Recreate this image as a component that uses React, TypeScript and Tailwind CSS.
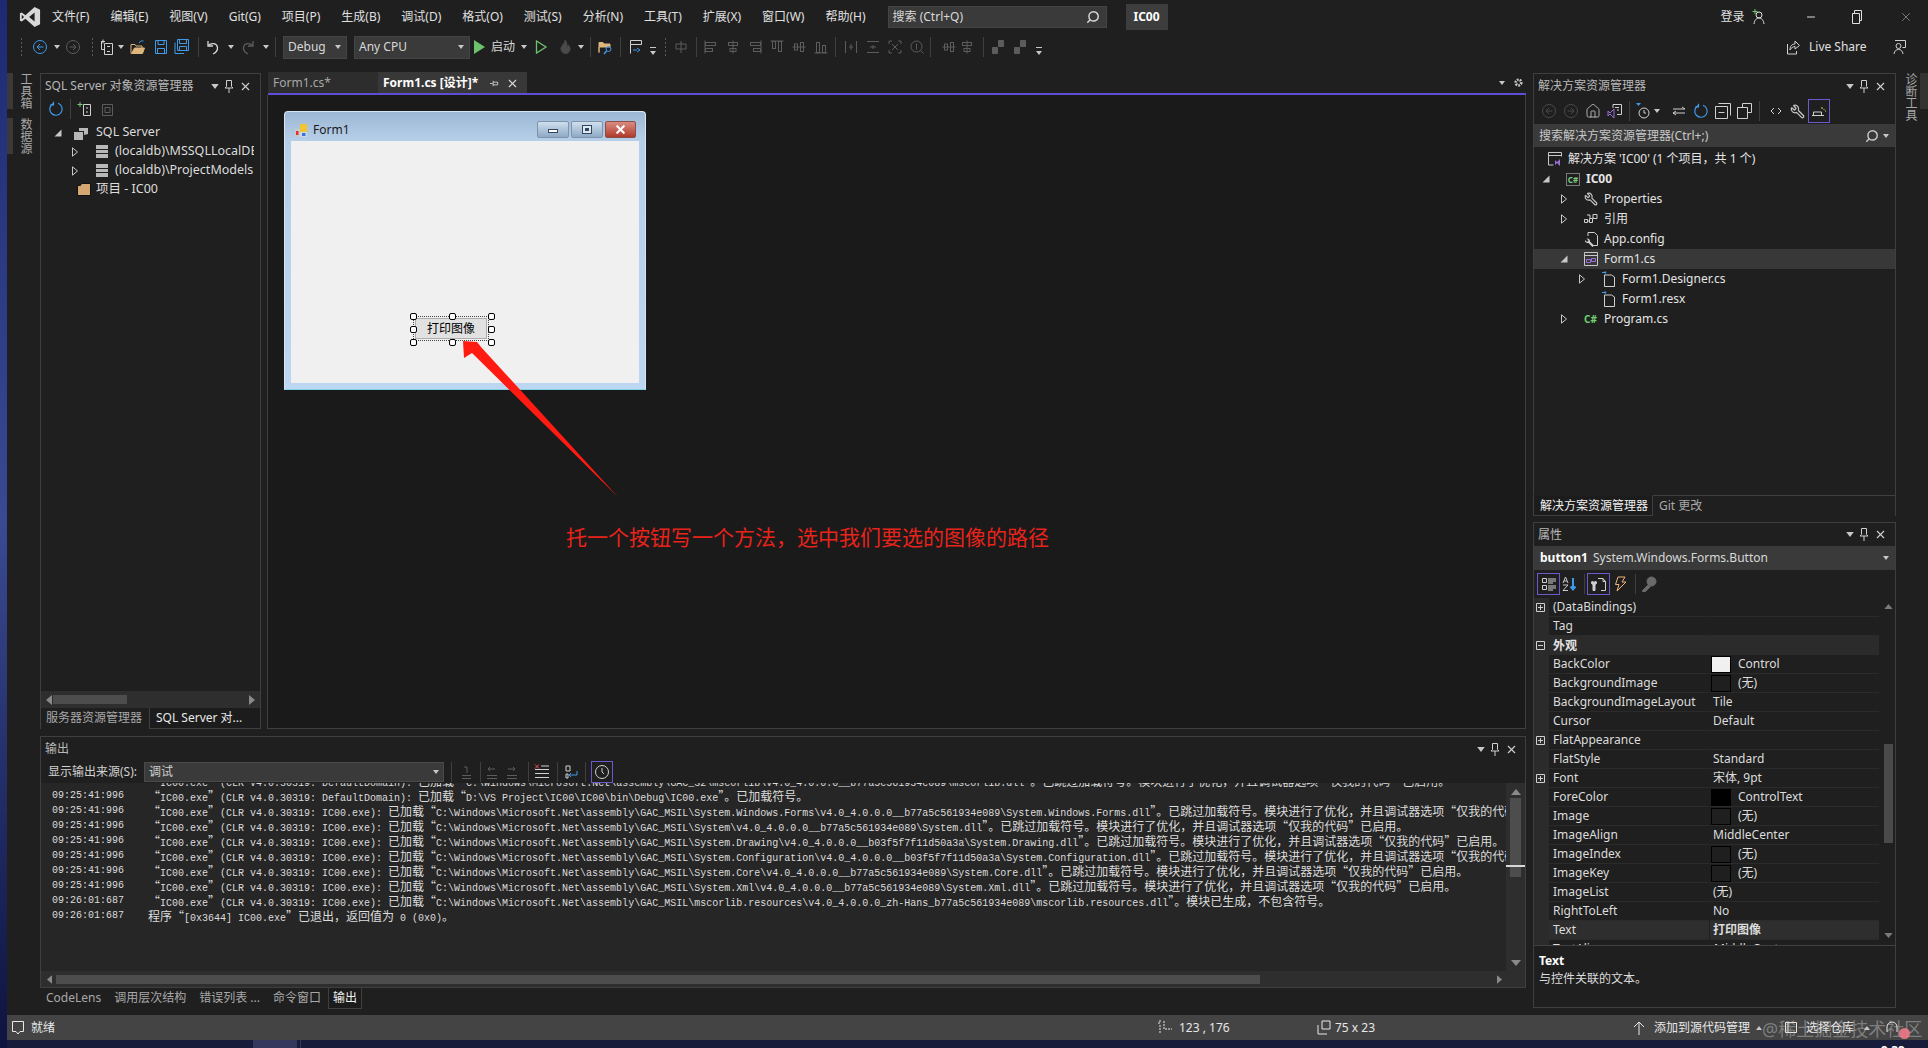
import type { ReactNode } from "react";
import { Home, Minus, Search, Wrench, X } from "lucide-react";

const Svg = ({ className = "", children }: { className?: string; children: ReactNode }) => (
  <svg viewBox="0 0 16 16" fill="none" stroke="currentColor" strokeWidth="1" className={`w-[16px] h-[16px] shrink-0 ${className}`}>
    {children}
  </svg>
);

const Dd = ({ className = "" }: { className?: string }) => (
  <svg viewBox="0 0 6 4" className={`w-[6px] h-[4px] shrink-0 text-[#c8c8c8] ${className}`}>
    <path d="M0 0h6L3 4z" fill="currentColor" />
  </svg>
);

const Sep = ({ className = "" }: { className?: string }) => <div className={`w-px h-[20px] bg-[#3f3f3f] shrink-0 ${className}`} />;

const Grip = ({ className = "" }: { className?: string }) => (
  <div className={`w-[3px] h-[20px] shrink-0 bg-[radial-gradient(#5a5a5a_0.8px,transparent_0.9px)] bg-[length:3px_4px] ${className}`} />
);

const Overflow = ({ className = "" }: { className?: string }) => (
  <svg viewBox="0 0 6 8" className={`w-[6px] h-[8px] mt-[8px] shrink-0 text-[#c8c8c8] ${className}`}>
    <path d="M0 0h6v1H0zM0 4h6L3 8z" fill="currentColor" />
  </svg>
);

const Refresh = ({ className = "" }: { className?: string }) => (
  <Svg className={`text-[#3f9ae8] ${className}`}>
    <path d="M5 2.600A6.200 6.200 0 1 0 10 2.200" strokeWidth="1.200" />
    <path d="M5.500 .8v3h-3" strokeWidth="1.200" />
  </Svg>
);

const AlignIcon = ({ v = 0, className = "" }: { v?: number; className?: string }) => (
  <Svg className={`text-[#5c5c5c] ${className}`}>
    {v % 2 === 0 ? (
      <>
        <path d="M2 1.500v13" />
        <rect x="2.500" y="3.500" width="10" height="3" />
        <rect x="2.500" y="9.500" width="7" height="3" />
      </>
    ) : (
      <>
        <path d="M8 1.500v13" />
        <rect x="3.500" y="3.500" width="9" height="3" />
        <rect x="5" y="9.500" width="6" height="3" />
      </>
    )}
  </Svg>
);

const DistIcon = ({ className = "" }: { className?: string }) => (
  <Svg className={`text-[#5c5c5c] ${className}`}>
    <path d="M2.500 2v12M13.500 2v12M6 8h4M8 5v6" />
  </Svg>
);

const Caret = ({ open = false }: { open?: boolean }) => (
  <svg viewBox="0 0 8 10" className="w-[8px] h-[10px] text-[#c8c8c8]">
    {open ? <path d="M7.500 1.500v7h-7z" fill="currentColor" /> : <path d="M1.500 .8 6.500 5l-5 4.200z" fill="none" stroke="currentColor" />}
  </svg>
);

const PanelControls = ({ className = "" }: { className?: string }) => (
  <div className={`flex items-center text-[#d0d0d0] ${className}`}>
    <Dd className="w-[8px] h-[5px]" />
    <svg viewBox="0 0 10 13" className="w-[10px] h-[13px] ml-[5px]">
      <path d="M2.500 .5h5v6l1.500 1.500H1L2.500 6.500zM5 8v5" fill="none" stroke="currentColor" />
    </svg>
    <X className="w-[13px] h-[13px] ml-[5px]" strokeWidth={2} />
  </div>
);

const Vertical = ({ children, className = "" }: { children: ReactNode; className?: string }) => (
  <div className={`[writing-mode:vertical-rl] whitespace-nowrap text-[12px] leading-[14px] text-[#a8a8a8] ${className}`}>{children}</div>
);

const menus = ["文件(F)", "编辑(E)", "视图(V)", "Git(G)", "项目(P)", "生成(B)", "调试(D)", "格式(O)", "测试(S)", "分析(N)", "工具(T)", "扩展(X)", "窗口(W)", "帮助(H)"];

const TitleBar = () => (
  <div className="h-[32px] pt-[1px] flex items-center shrink-0 text-[#e0e0e0] text-[12px]">
    <svg viewBox="0 0 24 24" className="w-[22px] h-[22px] ml-[12px] text-[#d8d8d8]">
      <path fillRule="evenodd" fill="currentColor" d="M17 1l6 3v16l-6 3-10-9-4 3-2-1V8l2-1 4 3zM17 7l-6 5 6 5zM3 9.500v5L5.500 12z" />
    </svg>
    <div className="flex gap-[21px] ml-[11px] whitespace-nowrap">
      {menus.map((m) => (
        <span key={m}>{m}</span>
      ))}
    </div>
    <div className="ml-[22px] w-[219px] h-[22px] bg-[#3a3a3a] border border-[#444] flex items-center justify-between px-[4px] text-[#d8d8d8]">
      <span>搜索 (Ctrl+Q)</span>
      <Search className="w-[14px] h-[14px] -scale-x-100 mr-[2px]" strokeWidth={2.500} />
    </div>
    <div className="ml-[19px] w-[42px] h-[26px] bg-[#3d3d3d] flex items-center justify-center font-bold text-white">IC00</div>
    <span className="ml-[553px]">登录</span>
    <svg viewBox="0 0 14 16" className="w-[14px] h-[16px] ml-[7px]">
      <circle cx="7" cy="6" r="3" fill="none" stroke="currentColor" />
      <path d="M2 15c.5-4 2.500-6 5-6s4.500 2 5 6" fill="none" stroke="currentColor" />
      <path d="M3 0v5M.5 2.500h5" stroke="#6fcf6f" />
    </svg>
    <Minus className="w-[12px] h-[12px] ml-[39px]" />
    <svg viewBox="0 0 12 14" className="w-[12px] h-[14px] ml-[34px]">
      <path d="M1.500 3.500h7v10h-7zM3.500 3.500v-3h7v10h-2" fill="none" stroke="currentColor" />
    </svg>
    <X className="w-[14px] h-[14px] ml-[36px] text-[#b8b8b8]" strokeWidth={1} />
  </div>
);

const ToolBar = () => (
  <div className="h-[32px] pb-[2px] flex items-center shrink-0 text-[12px] text-[#d8d8d8]">
    <Grip className="ml-[13px]" />
    <Svg className="ml-[9px] text-[#3f9ae8]"><circle cx="8" cy="8" r="6.500" /><path d="M11.500 8h-6M8 5 5 8l3 3" /></Svg>
    <Dd className="ml-[6px]" />
    <Svg className="ml-[5px] text-[#5c5c5c]"><circle cx="8" cy="8" r="6.500" /><path d="M4.500 8h6M8 5l3 3-3 3" /></Svg>
    <Grip className="ml-[10px]" />
    <Svg className="ml-[5px] text-[#d0d0d0]"><path d="M5.500 4.500h8v11h-8zM2.500 2.500v8h3M4 .5v4M2 2.500h4" /><path d="M8 12.500h3M8 7.500h3" /></Svg>
    <Dd className="ml-[3px]" />
    <Svg className="ml-[6px]"><path d="M1 14.500V5.500h4l1 1.500h6v2" stroke="#dcb67a" /><path d="M1.500 14.500h11l2-5.500h-10z" fill="#dcb67a" stroke="#dcb67a" /><path d="M9 4c1-2 3-2.500 4.500-2" stroke="#3f9ae8" /></Svg>
    <Svg className="ml-[7px] text-[#3f9ae8]"><path d="M2.500 1.500h11v13h-11zM5 1.500v4h6v-4M4.500 14.500v-5h7v5" /></Svg>
    <Svg className="ml-[5px] text-[#3f9ae8]"><path d="M1 3.500v11h9M3.500 .5h11v11h-11zM5.500 .5v4h7v-4M5.500 11.500v-4h7v4" /></Svg>
    <Sep className="ml-[8px]" />
    <Svg className="ml-[6px] text-[#d8d8d8]"><path d="M3 2v5h5" strokeWidth="1.300" /><path d="M3.500 6.500C6 3.500 12 4 12.500 8.500c.3 3-1.500 5-4.500 6.500" strokeWidth="1.300" /></Svg>
    <Dd className="ml-[7px]" />
    <Svg className="ml-[6px] text-[#5c5c5c]"><path d="M13 2v5H8" strokeWidth="1.300" /><path d="M12.500 6.500C10 3.500 4 4 3.500 8.500c-.3 3 1.500 5 4.500 6.500" strokeWidth="1.300" /></Svg>
    <Dd className="ml-[7px] text-[#5c5c5c]" />
    <Sep className="ml-[6px]" />
    <div className="ml-[7px] w-[64px] h-[23px] bg-[#3a3a3a] flex items-center justify-between px-[4px] border border-[#444]">
      <span>Debug</span>
      <Dd className="mr-[1px]" />
    </div>
    <div className="ml-[7px] w-[116px] h-[23px] bg-[#3a3a3a] flex items-center justify-between px-[4px] border border-[#444]">
      <span>Any CPU</span>
      <Dd className="mr-[1px]" />
    </div>
    <svg viewBox="0 0 14 16" className="w-[14px] h-[16px] ml-[2px] shrink-0"><path d="M2 1l11 7-11 7z" fill="#6cc16c" /></svg>
    <span className="ml-[5px] w-[24px]">启动</span>
    <Dd className="ml-[6px]" />
    <svg viewBox="0 0 14 16" className="w-[14px] h-[16px] ml-[7px] shrink-0"><path d="M2.500 2l9.500 6-9.500 6z" fill="none" stroke="#6cc16c" strokeWidth="1.300" /></svg>
    <Svg className="ml-[9px] text-[#4a4a4a]"><path d="M8 1c1 3-4 5-4 9a4.500 4.500 0 0 0 9 0c0-2-1-3-2-4 0 2-1 2.500-1.500 2.500C10 6 10 3 8 1z" fill="currentColor" /></Svg>
    <Dd className="ml-[5px] text-[#5c5c5c]" />
    <Sep className="ml-[6px]" />
    <Svg className="ml-[7px]"><path d="M1 13.500v-10h4l1 1.500h6v3H1z" fill="#dcb67a" stroke="#dcb67a" /><circle cx="10.500" cy="10" r="2.500" stroke="#3f9ae8" /><path d="m8.500 12-2.500 3" stroke="#3f9ae8" strokeWidth="1.500" /></Svg>
    <Sep className="ml-[6px]" />
    <Svg className="ml-[7px] text-[#d0d0d0]"><path d="M2.500 14.500v-13h11v4M2.500 5.500h11" /><path d="M9 11H5M9 9l3 2-3 2" stroke="#3f9ae8" /></Svg>
    <Overflow className="ml-[6px]" />
    <Grip className="ml-[8px]" />
    <Svg className="ml-[6px] text-[#5c5c5c]"><path d="M8 2v12M3 5h10M3 5v5h10V5" /></Svg>
    <Sep className="ml-[7px]" />
    <AlignIcon v={0} className="ml-[6px]" />
    <AlignIcon v={1} className="ml-[6px]" />
    <AlignIcon v={0} className="ml-[6px] -scale-x-100" />
    <AlignIcon v={0} className="ml-[6px] rotate-90" />
    <AlignIcon v={1} className="ml-[6px] rotate-90" />
    <AlignIcon v={0} className="ml-[6px] -rotate-90" />
    <Sep className="ml-[6px]" />
    <DistIcon className="ml-[7px]" />
    <DistIcon className="ml-[6px] rotate-90" />
    <Svg className="ml-[6px] text-[#5c5c5c]"><path d="M2 5V2h3M11 2h3v3M14 11v3h-3M5 14H2v-3M5 5l6 6M11 5l-6 6" /></Svg>
    <Svg className="ml-[6px] text-[#5c5c5c]"><circle cx="7.500" cy="7.500" r="5.500" /><path d="m11.500 11.500 3 3M7.500 4.500v6" /></Svg>
    <Sep className="ml-[5px]" />
    <AlignIcon v={1} className="ml-[10px] rotate-90" />
    <AlignIcon v={1} className="ml-[2px]" />
    <Sep className="ml-[8px]" />
    <Svg className="ml-[6px] text-[#5c5c5c]"><path d="M8.500 1.500h5v6h-5zM2.500 8.500h5v6h-5z" fill="currentColor" /></Svg>
    <Svg className="ml-[6px] text-[#5c5c5c]"><path d="M8.500 1.500h5v6h-5zM2.500 8.500h5v6h-5z" fill="currentColor" /></Svg>
    <Overflow className="ml-[8px]" />
    <div className="flex-1" />
    <Svg className="text-[#d0d0d0]"><path d="M2.500 5v10h9v-3" /><path d="M5 11c0-4 2-6 5-6V2l4.500 4.500L10 10V7.500C8 7.500 6 9 5 11z" /></Svg>
    <span className="ml-[8px] w-[59px] whitespace-nowrap text-[#e0e0e0]">Live Share</span>
    <Svg className="ml-[23px] mr-[21px] text-[#d0d0d0]"><path d="M4 1.500h10.500v7h-3" /><circle cx="7.500" cy="7" r="2.500" /><path d="M3 15c.4-3 2-4.500 4.500-4.500S11.600 12 12 15" /></Svg>
  </div>
);

const SqlTree = () => (
  <div className="flex-1 pt-[3px] text-[12.500px] text-[#dcdcdc] whitespace-nowrap overflow-hidden">
    <div className="h-[19px] flex items-center pl-[13px]">
      <Caret open />
      <svg viewBox="0 0 16 16" className="w-[16px] h-[16px] ml-[11px] text-[#b8b8b8]"><path d="M6 3h9v6l-4 1V6H6zM1 7h9v8H1z" fill="currentColor" /></svg>
      <span className="ml-[7px]">SQL Server</span>
    </div>
    {["(localdb)\\MSSQLLocalDB", "(localdb)\\ProjectModels"].map((t) => (
      <div key={t} className="h-[19px] flex items-center pl-[30px]">
        <Caret />
        <div className="ml-[17px] w-[12px] h-[13px] flex flex-col gap-px shrink-0">
          <div className="flex-1 bg-[#b8b8b8]" /><div className="flex-1 bg-[#b8b8b8]" /><div className="flex-1 bg-[#b8b8b8]" />
        </div>
        <span className="ml-[7px] overflow-hidden w-[139px]">{t}</span>
      </div>
    ))}
    <div className="h-[19px] flex items-center pl-[36px]">
      <svg viewBox="0 0 14 13" className="w-[14px] h-[13px]"><path d="M.5 2.500h3l1-2h9v12H.5z" fill="#d6a871" stroke="#111" /></svg>
      <span className="ml-[5px]">项目 - IC00</span>
    </div>
  </div>
);

const LeftPanel = () => (
  <div className="w-[221px] flex flex-col shrink-0 border border-[#3f3f3f] border-b-0">
    <div className="h-[24px] flex items-center justify-between pl-[4px] pr-[8px] shrink-0 text-[12px] text-[#b8b8b8]">
      <span>SQL Server 对象资源管理器</span>
      <PanelControls />
    </div>
    <div className="h-[22px] flex items-center pl-[7px] shrink-0">
      <Refresh />
      <Sep className="ml-[6px]" />
      <Svg className="ml-[6px] text-[#d0d0d0]"><path d="M6.500 3.500h7v11h-7zM9 11h2M9 7h2" /><path d="M3 1v5M.5 3.500h5" stroke="#6fcf6f" /></Svg>
      <Svg className="ml-[6px] text-[#5c5c5c]"><path d="M3.500 3.500h10v11h-10zM6 6.500h5v5H6z" /></Svg>
    </div>
    <SqlTree />
    <div className="h-[17px] bg-[#2e2e2e] flex items-center justify-between px-[5px] shrink-0">
      <svg viewBox="0 0 6 10" className="w-[6px] h-[10px] text-[#8a8a8a]"><path d="M6 0v10L0 5z" fill="currentColor" /></svg>
      <div className="w-[74px] h-[9px] bg-[#4d4d4d] mr-[122px]" />
      <svg viewBox="0 0 6 10" className="w-[6px] h-[10px] text-[#8a8a8a]"><path d="M0 0v10l6-5z" fill="currentColor" /></svg>
    </div>
    <div className="h-[21px] flex text-[12px] shrink-0">
      <div className="w-[108px] pl-[5px] leading-[20px] text-[#a8a8a8] whitespace-nowrap">服务器资源管理器</div>
      <div className="flex-1 pl-[6px] leading-[20px] text-[#e8e8e8] border-l border-b border-[#3f3f3f] bg-[#1c1c1c] whitespace-nowrap">SQL Server 对...</div>
    </div>
  </div>
);

const handleSpots = [
  "left-[-6px] top-[-6px]", "left-[33px] top-[-6px]", "left-[72px] top-[-6px]",
  "left-[-6px] top-[7px]", "left-[72px] top-[7px]",
  "left-[-6px] top-[20px]", "left-[33px] top-[20px]", "left-[72px] top-[20px]",
];

const WinBtn = ({ red = false, children, className = "" }: { red?: boolean; children: ReactNode; className?: string }) => (
  <div
    className={`h-[17px] rounded-[2px] border flex items-center justify-center ${className} ${
      red ? "w-[31px] border-[#8a5048] bg-gradient-to-b from-[#d98b80] to-[#b03a2c] text-white" : "w-[32px] border-[#7f94ab] bg-gradient-to-b from-[#cfdfee] to-[#8faac6] text-[#33465c]"
    }`}
  >
    {children}
  </div>
);

const DesignForm = () => (
  <div className="ml-[16px] mt-[16px] w-[362px] h-[279px] rounded-t-[4px] border border-[#d6e6f4] border-b-[#7fd0e8] bg-gradient-to-b from-[#b4cee8] to-[#bcd7ef] flex flex-col">
    <div className="h-[29px] pt-[7px] flex items-center shrink-0 rounded-t-[4px] bg-gradient-to-b from-[#9cb7d4] to-[#b7d0e9] text-[12px] text-[#1a1a1a]">
      <svg viewBox="0 0 12 13" className="w-[12px] h-[13px] ml-[10px]">
        <rect x="0" y="5" width="5" height="8" fill="#c9c9c9" /><rect x="1" y="7" width="2.500" height="4" fill="#d33" />
        <rect x="5" y="0" width="7" height="8" fill="#f2c430" /><rect x="5" y="8" width="7" height="5" fill="#cfd8e8" /><rect x="7" y="9" width="3.500" height="3" fill="#3a74d8" />
      </svg>
      <span className="ml-[6px]">Form1</span>
      <div className="flex-1" />
      <div className="flex gap-[2px] mr-[9px] -mt-[2px]">
        <WinBtn><div className="w-[10px] h-[4px] bg-white border border-[#33465c] mt-[4px]" /></WinBtn>
        <WinBtn><div className="w-[10px] h-[9px] border border-[#33465c] bg-[#dce8f4] flex items-center justify-center"><div className="w-[4px] h-[3px] bg-[#33465c]" /></div></WinBtn>
        <WinBtn red><X className="w-[13px] h-[13px]" strokeWidth={4} /></WinBtn>
      </div>
    </div>
    <div className="relative mx-[6px] w-[348px] h-[242px] bg-[#f0f0f0] shrink-0">
      <div className="absolute left-[124px] top-[177px] w-[72px] h-[21px] bg-[#e1e1e1] border border-[#adadad] flex items-center justify-center text-[12px] text-black">
        <div className="absolute -inset-[3px] border border-dotted border-[#444]" />
        打印图像
        {handleSpots.map((s) => (
          <div key={s} className={`absolute w-[7px] h-[7px] rounded-[2px] bg-white border border-black ${s}`} />
        ))}
      </div>
    </div>
  </div>
);

const DocArea = () => (
  <div className="flex-1 ml-[7px] flex flex-col min-w-0">
    <div className="h-[21px] -mt-px flex items-stretch shrink-0 text-[12px]">
      <div className="w-[110px] bg-[#2d2d2d] pl-[5px] leading-[21px] text-[#a8a8a8]">Form1.cs*</div>
      <div className="w-[149px] bg-[#383838] flex items-center pl-[5px] pt-px font-bold text-white whitespace-nowrap">
        <span>Form1.cs [设计]*</span>
        <svg viewBox="0 0 10 10" className="w-[9px] h-[9px] ml-[12px] text-[#d0d0d0]"><path d="M3.500 2v6M3.500 3.500h5v3h-5M0 5h3" fill="none" stroke="currentColor" /></svg>
        <X className="w-[13px] h-[13px] ml-[7px] font-normal text-[#d8d8d8]" strokeWidth={2} />
      </div>
      <div className="flex-1 flex items-center justify-end pr-[2px] text-[#c8c8c8]">
        <Dd />
        <svg viewBox="0 0 16 16" className="w-[11px] h-[11px] ml-[8px]"><circle cx="8" cy="8" r="4" fill="none" stroke="currentColor" strokeWidth="4" strokeDasharray="2.500 1.500" /></svg>
      </div>
    </div>
    <div className="h-[2px] bg-[#5b4fd8] shrink-0" />
    <div className="relative flex-1 bg-[#1a1a1a] border-l border-r border-b border-[#3f3f3f] -ml-px">
      <DesignForm />
      <svg viewBox="0 0 400 420" className="absolute left-0 top-0 w-[400px] h-[420px] pointer-events-none">
        <path d="M195 246 209 247 213 252 350 402 204 258 196 263z" fill="#ff1a12" />
      </svg>
      <div className="absolute left-[298px] top-[429px] text-[21px] leading-[26px] text-[#e8231a] whitespace-nowrap">{"托一个按钮写一个方法\uff0c选中我们要选的图像的路径"}</div>
    </div>
  </div>
);

const SimText = ({ text }: { text: string }) => (
  <>
    {text.split(/([\u3000-\u9fff\uff00-\uffef“”]+)/).map((part, i) =>
      i % 2 === 1 ? (
        <span key={i} className="text-[12px] font-['Noto_Sans_CJK_SC',sans-serif] [font-feature-settings:'fwid']">{part}</span>
      ) : (
        <span key={i}>{part}</span>
      )
    )}
  </>
);

const dbg = "已跳过加载符号。模块进行了优化\uff0c并且调试器选项“仅我的代码”已启用。";
const net = "“IC00.exe”(CLR v4.0.30319: IC00.exe): 已加载“C:\\Windows\\Microsoft.Net\\assembly\\GAC_MSIL\\";
const logLines: [string, string][] = [
  ["09:25:41:996", "“IC00.exe”(CLR v4.0.30319: DefaultDomain): 已加载“C:\\Windows\\Microsoft.Net\\assembly\\GAC_32\\mscorlib\\v4.0_4.0.0.0__b77a5c561934e089\\mscorlib.dll”。" + dbg],
  ["09:25:41:996", "“IC00.exe”(CLR v4.0.30319: DefaultDomain): 已加载“D:\\VS Project\\IC00\\IC00\\bin\\Debug\\IC00.exe”。已加载符号。"],
  ["09:25:41:996", net + "System.Windows.Forms\\v4.0_4.0.0.0__b77a5c561934e089\\System.Windows.Forms.dll”。" + dbg],
  ["09:25:41:996", net + "System\\v4.0_4.0.0.0__b77a5c561934e089\\System.dll”。" + dbg],
  ["09:25:41:996", net + "System.Drawing\\v4.0_4.0.0.0__b03f5f7f11d50a3a\\System.Drawing.dll”。" + dbg],
  ["09:25:41:996", net + "System.Configuration\\v4.0_4.0.0.0__b03f5f7f11d50a3a\\System.Configuration.dll”。" + dbg],
  ["09:25:41:996", net + "System.Core\\v4.0_4.0.0.0__b77a5c561934e089\\System.Core.dll”。" + dbg],
  ["09:25:41:996", net + "System.Xml\\v4.0_4.0.0.0__b77a5c561934e089\\System.Xml.dll”。" + dbg],
  ["09:26:01:687", net + "mscorlib.resources\\v4.0_4.0.0.0_zh-Hans_b77a5c561934e089\\mscorlib.resources.dll”。模块已生成\uff0c不包含符号。"],
  ["09:26:01:687", "程序“[0x3644] IC00.exe”已退出\uff0c返回值为 0 (0x0)。"],
];

const OutputPanel = () => (
  <div className="h-[252px] mt-[7px] flex flex-col border border-[#3f3f3f] shrink-0">
    <div className="h-[24px] flex items-center justify-between pl-[4px] pr-[7px] shrink-0 text-[12px] text-[#b8b8b8]">
      <span>输出</span>
      <PanelControls />
    </div>
    <div className="h-[22px] flex items-center pl-[7px] shrink-0 text-[12px] text-[#d0d0d0]">
      <span className="w-[96px] whitespace-nowrap">显示输出来源(S):</span>
      <div className="w-[300px] h-[20px] bg-[#3a3a3a] border border-[#4a4a4a] flex items-center justify-between px-[4px]">
        <span>调试</span>
        <Dd />
      </div>
      <Sep className="ml-[7px]" />
      <Svg className="ml-[6px] text-[#5c5c5c]"><path d="M4 14.500h9M4 11.500h9M9 9V3H6" /></Svg>
      <Sep className="ml-[6px]" />
      <Svg className="ml-[3px] text-[#5c5c5c]"><path d="M3 14.500h10M3 11.500h10M11 5H4M6 3 4 5l2 2" /></Svg>
      <Svg className="ml-[4px] text-[#5c5c5c]"><path d="M3 14.500h10M3 11.500h10M4 5h7M9 3l2 2-2 2" /></Svg>
      <Sep className="ml-[8px]" />
      <Svg className="ml-[5px] text-[#d0d0d0]"><path d="M1 5.500h14M1 9.500h14M1 13.500h14M7 2h8" /><path d="m1 .5 4 4M5 .5l-4 4" stroke="#f05050" /></Svg>
      <Sep className="ml-[7px]" />
      <Svg className="ml-[6px] text-[#d0d0d0]"><path d="M13 7v4H5M7 9l-2 2 2 2" stroke="#3f9ae8" /><path d="M2 2h4v5H2zM2 10h2v4H2z" /></Svg>
      <Sep className="ml-[5px]" />
      <div className="ml-[5px] w-[22px] h-[22px] border border-[#6a5acd] flex items-center justify-center">
        <Svg className="text-[#d0d0d0]"><circle cx="8" cy="8" r="6.500" /><path d="M8 4v4l2 2" /></Svg>
      </div>
    </div>
    <div className="flex-1 flex bg-[#262626] min-h-0">
      <div className="flex-1 min-w-0 overflow-hidden">
        <div className="-mt-[10px] pl-[11px] font-['Liberation_Mono','Noto_Sans_CJK_SC',monospace] text-[10px] text-[#dcdcdc]">
          {logLines.map(([time, text], i) => (
            <div key={i} className="h-[15px] leading-[15px] flex whitespace-nowrap">
              <span className="w-[96px] shrink-0">{time}</span>
              <span><SimText text={text} /></span>
            </div>
          ))}
        </div>
      </div>
      <div className="w-[19px] bg-[#2e2e2e] flex flex-col items-center shrink-0 relative">
        <svg viewBox="0 0 10 6" className="w-[10px] h-[6px] mt-[6px] text-[#8a8a8a]"><path d="M0 6h10L5 0z" fill="currentColor" /></svg>
        <div className="w-[11px] h-[79px] bg-[#4d4d4d] mt-[3px]" />
        <div className="absolute left-0 top-[82px] w-[19px] h-[2px] bg-[#d8d8d8]" />
        <div className="flex-1" />
        <svg viewBox="0 0 10 6" className="w-[10px] h-[6px] mb-[5px] text-[#8a8a8a]"><path d="M0 0h10L5 6z" fill="currentColor" /></svg>
      </div>
    </div>
    <div className="h-[16px] bg-[#2e2e2e] flex items-center px-[6px] shrink-0">
      <svg viewBox="0 0 6 10" className="w-[5px] h-[9px] text-[#8a8a8a]"><path d="M6 0v10L0 5z" fill="currentColor" /></svg>
      <div className="w-[1204px] h-[9px] bg-[#4d4d4d] ml-[4px]" />
      <div className="flex-1" />
      <svg viewBox="0 0 6 10" className="w-[5px] h-[9px] text-[#8a8a8a] mr-[17px]"><path d="M0 0v10l6-5z" fill="currentColor" /></svg>
    </div>
  </div>
);

const OutputTabs = () => (
  <div className="h-[21px] flex items-start pl-[6px] text-[12px] text-[#a8a8a8] shrink-0 whitespace-nowrap">
    <span className="leading-[19px]">CodeLens</span>
    <span className="leading-[19px] ml-[13px]">调用层次结构</span>
    <span className="leading-[19px] ml-[13px]">错误列表 ...</span>
    <span className="leading-[19px] ml-[13px]">命令窗口</span>
    <span className="leading-[19px] ml-[7px] px-[4px] h-[21px] border border-t-0 border-[#3f3f3f] bg-[#1c1c1c] text-[#f0f0f0]">输出</span>
  </div>
);

type TreeRow = { label: string; pad: string; icon: ReactNode; caret?: "open" | "closed"; bold?: boolean; selected?: boolean; none?: boolean };

const FileIcon = () => (
  <svg viewBox="0 0 14 16" className="w-[14px] h-[16px] shrink-0 text-[#d0d0d0]">
    <path d="M2.500 4v11.500h10V6l-3-2z" fill="none" stroke="currentColor" />
    <path d="M0 1.500h4M2.500 0 4.200 1.500 2.500 3" fill="none" stroke="#3f9ae8" />
  </svg>
);

const treeRows: TreeRow[] = [
  {
    label: "解决方案 'IC00' (1 个项目\uff0c共 1 个)", pad: "pl-[14px]", none: true,
    icon: <svg viewBox="0 0 14 14" className="w-[14px] h-[14px] shrink-0 text-[#c8c8c8]"><path d="M.5 9V.5h13v4M.5 3.500h13M.5 9v4h5" fill="none" stroke="currentColor" /><path d="M7 8l2 2 3-3v7l-3-3-2 2z" fill="#9b6fd8" /></svg>,
  },
  {
    label: "IC00", pad: "pl-[7px]", caret: "open", bold: true,
    icon: <div className="w-[14px] h-[13px] border border-[#7a7a7a] shrink-0 text-[8px] leading-[11px] text-center font-bold text-[#7fc97f]">C#</div>,
  },
  { label: "Properties", pad: "pl-[25px]", caret: "closed", icon: <Wrench className="w-[14px] h-[14px] -scale-x-100 text-[#c8c8c8] shrink-0" /> },
  {
    label: "引用", pad: "pl-[25px]", caret: "closed",
    icon: <svg viewBox="0 0 14 12" className="w-[14px] h-[12px] shrink-0 text-[#d0d0d0]"><path d="M.5 6.500h3v3h-3zM5.500 5.500h3v4h-3zM9 1.500h4v4H9zM3.500 8h2M8.500 5 9 4.500M3 2h3v3" fill="none" stroke="currentColor" /></svg>,
  },
  {
    label: "App.config", pad: "pl-[25px]",
    icon: <svg viewBox="0 0 14 16" className="w-[14px] h-[16px] shrink-0 text-[#d0d0d0]"><path d="M4 5V1.500h6.500l3 3v10h-6" fill="none" stroke="currentColor" /><path d="M1 9l2 2 1.500-1.500-2-2c2-.5 4 1 3.500 3l4 4-1.500 1.500-4-4c-2 .5-4-1-3.500-3z" fill="currentColor" /></svg>,
  },
  {
    label: "Form1.cs", pad: "pl-[25px]", caret: "open", selected: true,
    icon: <svg viewBox="0 0 14 14" className="w-[14px] h-[14px] shrink-0 text-[#c8c8c8]"><path d="M.5.5h13v13H.5zM.5 3.500h13" fill="none" stroke="currentColor" /><path d="M2.500 7.500h4v3h-4zM7.500 6.500h4v3h-4z" fill="none" stroke="#9b6fd8" /></svg>,
  },
  { label: "Form1.Designer.cs", pad: "pl-[43px]", caret: "closed", icon: <FileIcon /> },
  { label: "Form1.resx", pad: "pl-[43px]", icon: <FileIcon /> },
  { label: "Program.cs", pad: "pl-[25px]", caret: "closed", icon: <span className="w-[14px] shrink-0 text-[10px] leading-[14px] font-bold text-[#6fcf6f]">C#</span> },
];

const SolutionPanel = () => (
  <div className="h-[443px] flex flex-col shrink-0 border border-[#3f3f3f] border-b-0">
    <div className="h-[24px] flex items-center justify-between pl-[4px] pr-[8px] shrink-0 text-[12px] text-[#b8b8b8]">
      <span>解决方案资源管理器</span>
      <PanelControls />
    </div>
    <div className="h-[26px] flex items-center pl-[7px] shrink-0">
      <Svg className="text-[#4a4a4a]"><circle cx="8" cy="8" r="6.500" /><path d="M11.500 8h-6M8 5 5 8l3 3" /></Svg>
      <Svg className="ml-[6px] text-[#4a4a4a]"><circle cx="8" cy="8" r="6.500" /><path d="M4.500 8h6M8 5l3 3-3 3" /></Svg>
      <Home className="w-[16px] h-[16px] ml-[6px] text-[#d0d0d0]" strokeWidth={1.200} />
      <Svg className="ml-[6px] text-[#d0d0d0]"><path d="M6 5V1.500h8.500v10H10M8 4.500h4M10 7h2" /><path d="M1 8l2 2 4-4v9l-4-4-2 2z" stroke="#9b6fd8" /></Svg>
      <Sep className="ml-[6px]" />
      <Svg className="ml-[5px] text-[#d0d0d0]"><circle cx="9" cy="10" r="5" /><path d="M9 7v3h2" /><path d="M1 0h5L3.500 3z" fill="#3f9ae8" stroke="none" /></Svg>
      <Dd className="ml-[3px]" />
      <Svg className="ml-[11px] text-[#d0d0d0]"><path d="M2 6h12M11 4l3 2M14 10H2M5 8l-3 2 3 2" /></Svg>
      <Refresh className="ml-[6px]" />
      <Svg className="ml-[6px] text-[#d0d0d0]"><path d="M3.500 .5h12v12M.5 3.500h12v12H.5zM3.500 9.500h6" /></Svg>
      <Svg className="ml-[6px] text-[#d0d0d0]"><path d="M5.500 4V.5h9v9H11M.5 4.500h10v11H.5z" /></Svg>
      <Sep className="ml-[6px]" />
      <Svg className="ml-[8px] text-[#d0d0d0]"><path d="M6 5 3 8l3 3M10 5l3 3-3 3" /></Svg>
      <Wrench className="w-[15px] h-[15px] ml-[6px] -scale-x-100 text-[#c8c8c8]" />
      <div className="ml-[3px] w-[22px] h-[24px] border border-[#6a5acd] flex items-center justify-center">
        <Svg className="text-[#d0d0d0]"><path d="M1 12.500h12M2.500 12.500V9h8v3.500" /><path d="M13 6v1M15 8h-1M10 5h2" stroke="#e8d070" /></Svg>
      </div>
    </div>
    <div className="h-[23px] bg-[#3a3a3a] flex items-center justify-between pl-[5px] pr-[6px] shrink-0 text-[12px] text-[#c8c8c8]">
      <span>搜索解决方案资源管理器(Ctrl+;)</span>
      <div className="flex items-center gap-[4px]">
        <Search className="w-[14px] h-[14px] -scale-x-100" strokeWidth={2.500} />
        <Dd />
      </div>
    </div>
    <div className="flex-1 pt-[2px] text-[12px] text-[#e4e4e4] whitespace-nowrap min-h-0">
      {treeRows.map((r) => (
        <div key={r.label} className={`h-[20px] flex items-center ${r.pad} ${r.selected ? "bg-[#383838]" : ""}`}>
          {!r.none && <div className="w-[10px] flex justify-center shrink-0">{r.caret && <Caret open={r.caret === "open"} />}</div>}
          <div className={`w-[14px] flex items-center shrink-0 ${r.none ? "" : "ml-[15px]"}`}>{r.icon}</div>
          <span className={`ml-[6px] ${r.bold ? "font-bold" : ""}`}>{r.label}</span>
        </div>
      ))}
    </div>
    <div className="h-[21px] flex items-stretch shrink-0 text-[12px] -mx-px">
      <div className="w-[120px] pl-[6px] leading-[20px] text-[#f0f0f0] border-l border-r border-b border-t border-t-[#1f1f1f] border-[#3f3f3f] bg-[#1c1c1c] whitespace-nowrap">解决方案资源管理器</div>
      <div className="flex-1 pl-[6px] leading-[20px] text-[#a8a8a8] border-t border-[#3f3f3f]">Git 更改</div>
    </div>
  </div>
);

type Prop = { name: string; value?: ReactNode; swatch?: string; plus?: boolean; group?: boolean; active?: boolean };

const props: Prop[] = [
  { name: "(DataBindings)", plus: true },
  { name: "Tag" },
  { name: "外观", group: true },
  { name: "BackColor", value: "Control", swatch: "bg-[#f0f0f0]" },
  { name: "BackgroundImage", value: "(无)", swatch: "bg-[#1f1f1f]" },
  { name: "BackgroundImageLayout", value: "Tile" },
  { name: "Cursor", value: "Default" },
  { name: "FlatAppearance", plus: true },
  { name: "FlatStyle", value: "Standard" },
  { name: "Font", value: "宋体, 9pt", plus: true },
  { name: "ForeColor", value: "ControlText", swatch: "bg-black" },
  { name: "Image", value: "(无)", swatch: "bg-[#1f1f1f]" },
  { name: "ImageAlign", value: "MiddleCenter" },
  { name: "ImageIndex", value: "(无)", swatch: "bg-[#1f1f1f]" },
  { name: "ImageKey", value: "(无)", swatch: "bg-[#1f1f1f]" },
  { name: "ImageList", value: "(无)" },
  { name: "RightToLeft", value: "No" },
  { name: "Text", value: "打印图像", active: true },
];

const PlusBox = ({ minus = false }: { minus?: boolean }) => (
  <svg viewBox="0 0 9 9" className="w-[9px] h-[9px] text-[#d0d0d0]">
    <path d={minus ? "M.5.5h8v8h-8zM2 4.500h5" : "M.5.5h8v8h-8zM2 4.500h5M4.500 2v5"} fill="none" stroke="currentColor" />
  </svg>
);

const PropRow = ({ p }: { p: Prop }) =>
  p.group ? (
    <div className="h-[19px] flex items-center bg-[#2b2b2b] pl-[2px] text-[12px] font-bold text-[#e4e4e4]">
      <div className="w-[13px] flex"><PlusBox minus /></div>
      <span className="ml-[4px]">{p.name}</span>
    </div>
  ) : (
    <div className="h-[19px] flex items-stretch text-[12px] text-[#dcdcdc]">
      <div className="w-[15px] bg-[#2b2b2b] flex items-center pl-[2px] shrink-0">{p.plus && <PlusBox />}</div>
      <div className={`w-[160px] pl-[4px] leading-[18px] border-b border-[#2b2b2b] whitespace-nowrap shrink-0 ${p.active ? "bg-[#2e2e2e]" : ""}`}>{p.name}</div>
      <div className={`w-[169px] ml-px border-b border-[#2b2b2b] flex items-center whitespace-nowrap ${p.active ? "bg-[#2e2e2e] font-bold" : ""}`}>
        {p.swatch ? (
          <>
            <div className={`w-[20px] h-[17px] border border-black ml-px shrink-0 ${p.swatch}`} />
            <span className="ml-[7px]">{p.value}</span>
          </>
        ) : (
          <span className="ml-[3px]">{p.value}</span>
        )}
      </div>
    </div>
  );

const PropertiesPanel = () => (
  <div className="h-[486px] mt-[6px] flex flex-col shrink-0 border border-[#3f3f3f] text-[12px]">
    <div className="h-[23px] flex items-center justify-between pl-[4px] pr-[8px] shrink-0 text-[#b8b8b8]">
      <span>属性</span>
      <PanelControls />
    </div>
    <div className="h-[24px] bg-[#3a3a3a] flex items-center pl-[6px] pr-[6px] shrink-0 text-[#d8d8d8]">
      <span className="font-bold text-white">button1</span>
      <span className="ml-[5px]">System.Windows.Forms.Button</span>
      <div className="flex-1" />
      <Dd />
    </div>
    <div className="h-[27px] flex items-center pl-[3px] shrink-0">
      <div className="w-[23px] h-[22px] border border-[#6a5acd] flex items-center justify-center">
        <Svg className="text-[#d0d0d0]"><path d="M1.500 2.500h4v4h-4zM1.500 9.500h4v4h-4zM7 3h8M7 5h8M7 7h5M7 10h8M7 12h8M7 14h5" /></Svg>
      </div>
      <Svg className="ml-[2px] text-[#c8c8c8]"><path d="M1 7l2.500-6L6 7M2 5h3M1 9h5L1 14.500h5" /><path d="M11 2v11M8.500 10.500 11 13.500l2.500-3" stroke="#3f9ae8" strokeWidth="2" /></Svg>
      <Sep className="ml-[6px]" />
      <div className="ml-[2px] w-[23px] h-[22px] border border-[#6a5acd] flex items-center justify-center">
        <Svg className="text-[#d0d0d0]"><path d="M7 2.500h5l2.500 3v9H10M12 2.500v3h2.500" /><path d="M1.500 5 3 6.500 4.500 5c1.500 1 1.500 3-.5 3.500v6H2V8.500C0 8 0 6 1.500 5z" fill="currentColor" /></Svg>
      </div>
      <Svg className="ml-[3px]"><path d="M9 1H5L2.500 8.500H6L4 15l9-9H9l3-5z" stroke="#f2b478" /></Svg>
      <Sep className="ml-[6px]" />
      <Svg className="ml-[5px] text-[#6a6a6a]"><circle cx="10.500" cy="5.500" r="4.500" fill="currentColor" /><path d="M7.500 8.500 1.500 14.500v1h3l5-5" fill="currentColor" /></Svg>
    </div>
    <div className="flex-1 flex min-h-0 pt-px">
      <div className="w-[345px] shrink-0 overflow-hidden">
        {props.map((p) => (
          <PropRow key={p.name} p={p} />
        ))}
        <div className="h-[19px] flex text-[#dcdcdc] overflow-hidden">
          <div className="w-[15px] bg-[#2b2b2b]" />
          <div className="pl-[4px] w-[161px] leading-[18px]">TextAlign</div>
          <div className="pl-[4px]">MiddleCenter</div>
        </div>
      </div>
      <div className="w-[13px] ml-[3px] flex flex-col items-center relative">
        <svg viewBox="0 0 10 6" className="w-[9px] h-[5px] mt-[6px] text-[#7a7a7a]"><path d="M0 6h10L5 0z" fill="currentColor" /></svg>
        <div className="w-[9px] h-[99px] bg-[#4a4a4a] mt-[135px]" />
        <div className="flex-1" />
        <svg viewBox="0 0 10 6" className="w-[9px] h-[5px] mb-[7px] text-[#7a7a7a]"><path d="M0 0h10L5 6z" fill="currentColor" /></svg>
      </div>
    </div>
    <div className="h-[62px] shrink-0 border-t border-[#3f3f3f] pl-[5px] pt-[6px] text-[#dcdcdc] leading-[18px]">
      <div className="font-bold text-white">Text</div>
      <div>与控件关联的文本。</div>
    </div>
  </div>
);

const StatusBar = () => (
  <div className="h-[25px] bg-[#444444] flex items-center shrink-0 text-[12px] text-[#e8e8e8] relative whitespace-nowrap">
    <svg viewBox="0 0 12 14" className="w-[12px] h-[14px] ml-[5px]"><path d="M.5.5h11v10H8L6 13 4 10.500H.5z" fill="none" stroke="currentColor" /></svg>
    <span className="ml-[7px] w-[24px]">就绪</span>
    <Svg className="ml-[1103px] w-[13px] h-[13px]"><path d="M1 4V1h3M6 1v8h8M2 5v9" strokeDasharray="2 1" /></Svg>
    <span className="ml-[5px] w-[52px]">123 , 176</span>
    <Svg className="ml-[85px] w-[13px] h-[13px]"><path d="M6 1h8v8H6zM2 5v9h9" /></Svg>
    <span className="ml-[3px] w-[47px]">75 x 23</span>
    <Svg className="ml-[249px]"><path d="M8 15V2M3 7l5-5 5 5" /></Svg>
    <span className="ml-[7px]">添加到源代码管理</span>
    <Dd className="ml-[6px] rotate-180" />
    <Svg className="ml-[21px]"><path d="M2.500 2.500h11v10h-11zM5 2.500v10" /></Svg>
    <span className="ml-[7px]">选择仓库</span>
    <Dd className="ml-[10px] rotate-180" />
    <Svg className="ml-[14px]"><path d="M3 12V7a5 5 0 0 1 10 0v5" /></Svg>
    <div className="absolute left-[1755px] top-[2px] text-[18px] leading-[24px] text-[#c8c8c8]/45 pointer-events-none">@稀土掘金技术社区</div>
    <div className="absolute left-[1892px] top-[13px] w-[11px] h-[11px] rounded-full bg-[#f07a8a]/90" />
  </div>
);

export default function App() {
  return (
    <div className="w-[1928px] h-[1048px] flex overflow-hidden bg-[#1f1f1f] font-['Noto_Sans','Noto_Sans_CJK_SC',sans-serif]">
      <div className="w-[7px] shrink-0 bg-gradient-to-b from-[#1d2a72] via-[#3a4a92] to-[#0e1440]" />
      <div className="flex-1 flex flex-col min-w-0">
        <TitleBar />
        <ToolBar />
        <div className="h-[951px] flex pt-[9px] pb-[6px] shrink-0">
          <div className="w-[33px] shrink-0 flex flex-col gap-[9px]">
            <div className="h-[36px] border-l-[6px] border-[#3a3a3a] pl-[5px]"><Vertical>工具箱</Vertical></div>
            <div className="h-[36px] border-l-[6px] border-[#3a3a3a] pl-[5px]"><Vertical>数据源</Vertical></div>
          </div>
          <div className="w-[1486px] shrink-0 flex flex-col">
            <div className="h-[656px] flex shrink-0">
              <LeftPanel />
              <DocArea />
            </div>
            <OutputPanel />
            <OutputTabs />
          </div>
          <div className="w-[363px] ml-[7px] shrink-0 flex flex-col">
            <SolutionPanel />
            <PropertiesPanel />
          </div>
          <div className="flex-1 flex pl-[7px]">
            <Vertical>诊断工具</Vertical>
            <div className="w-[8px] h-[36px] bg-[#333] ml-auto" />
          </div>
        </div>
        <StatusBar />
        <div className="h-[8px] bg-[#161c3a] flex shrink-0 overflow-hidden relative">
          <div className="ml-[246px] w-[44px] bg-[#33385c]" />
          <div className="ml-[3px] w-px bg-[#33385c]" />
          <div className="absolute left-[1874px] top-[4px] text-[12px] leading-[14px] font-bold text-white">9:39</div>
        </div>
      </div>
    </div>
  );
}
